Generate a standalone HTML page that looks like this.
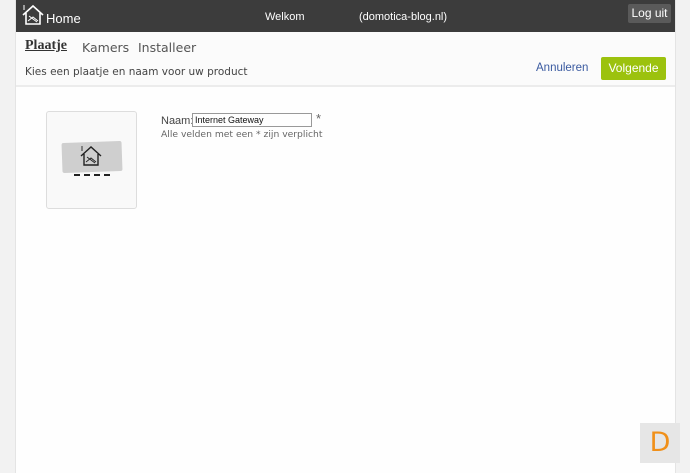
<!DOCTYPE html>
<html><head><style>
*{margin:0;padding:0;box-sizing:border-box}
body{width:690px;height:473px;overflow:hidden;background:#f2f2f2;font-family:"Liberation Sans",sans-serif;position:relative}
.wrap{position:absolute;left:15px;top:0;width:661px;height:473px;background:#fefefe;border-left:1px solid #e4e4e4;border-right:1px solid #e4e4e4}
.hdr{position:absolute;left:0;top:0;width:100%;height:32px;background:#3c3c3c;color:#fff}
.sub{position:absolute;left:0;top:32px;width:100%;height:55px;background:#fbfbfb;border-bottom:2px solid #ececec}
.abs{position:absolute;white-space:nowrap}
</style></head><body>
<div class="wrap">
 <div class="hdr">
  <svg class="abs" style="left:5px;top:4px" width="24" height="22" viewBox="0 0 24 22" fill="none" stroke="#fff" stroke-width="1.6"><path d="M2 11 L12 2 L22 11 M5 9 V20 H19 V9"/><path d="M7 17 L12 13 L17 17 M8 12 L16 18" stroke-width="1"/><path d="M3 1 V6" stroke-width="1"/></svg>
  <div class="abs" style="left:30px;top:11px;font-size:13px">Home</div>
  <div class="abs" style="left:249px;top:11px;font-size:11px">Welkom</div>
  <div class="abs" style="left:343px;top:11px;font-size:11px">(domotica-blog.nl)</div>
  <div class="abs" style="left:612px;top:4px;width:43px;height:19px;background:#5a5a5a;border-radius:2px;font-size:12px;text-align:center;line-height:19px">Log uit</div>
 </div>
 <div class="sub">
  <div class="abs" style="left:9px;top:6px;font-size:14px;font-weight:bold;color:#333;text-decoration:underline;font-family:'Liberation Serif',serif">Plaatje</div>
  <div class="abs" style="left:66px;top:8px;font-size:12.5px;color:#555;font-family:'DejaVu Sans',sans-serif">Kamers</div>
  <div class="abs" style="left:122px;top:8px;font-size:12.5px;color:#555;font-family:'DejaVu Sans',sans-serif">Installeer</div>
  <div class="abs" style="left:9px;top:34px;font-size:10.5px;color:#444;font-family:'DejaVu Sans',sans-serif">Kies een plaatje en naam voor uw product</div>
  <div class="abs" style="left:520px;top:30px;font-size:11.5px;color:#3a5aa0">Annuleren</div>
  <div class="abs" style="left:585px;top:25px;width:65px;height:23px;background:#9cc20e;border-radius:2px;color:#fff;font-size:12px;text-align:center;line-height:23px">Volgende</div>
 </div>
 <div class="abs" style="left:30px;top:111px;width:91px;height:98px;border:1px solid #ddd;border-radius:3px;background:#f9f9f9"></div>
 <div class="abs" style="left:46px;top:142px;width:60px;height:30px;background:#cfcfcf;border-radius:2px;transform:rotate(-2deg)"></div>
 <svg class="abs" style="left:63px;top:145px" width="24" height="22" viewBox="0 0 24 22" fill="none" stroke="#222" stroke-width="1.4"><path d="M2 11 L12 2 L22 11 M5 9 V20 H19 V9"/><path d="M7 17 L12 13 L17 17 M8 12 L16 18" stroke-width="0.9"/><path d="M3 1 V6" stroke-width="0.9"/></svg>
 <div class="abs" style="left:58px;top:174px;width:36px;height:2px;border-top:2px dashed #222"></div>
 <div class="abs" style="left:145px;top:115px;font-size:11px;color:#444">Naam:</div>
 <div class="abs" style="left:176px;top:113px;width:120px;height:14px;border:1px solid #999;font-size:9px;line-height:12px;padding-left:2px;color:#111">Internet Gateway</div>
 <div class="abs" style="left:300px;top:111px;font-size:13px;color:#666">*</div>
 <div class="abs" style="left:145px;top:129px;font-size:9.2px;color:#666;font-family:'DejaVu Sans',sans-serif">Alle velden met een * zijn verplicht</div>
</div>
<div class="abs" style="left:640px;top:423px;width:40px;height:40px;background:#e6e6e6;color:#f0901a;font-size:27px;text-align:center;line-height:40px;font-family:'DejaVu Sans',sans-serif">D</div>
</body></html>
